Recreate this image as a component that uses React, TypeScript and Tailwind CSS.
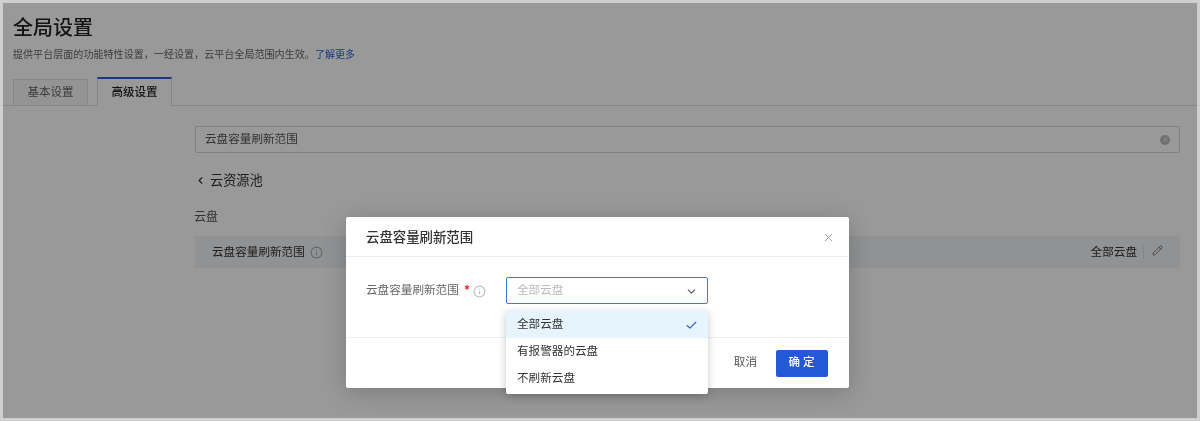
import { Check, ChevronDown, ChevronLeft, Info, Pencil, X } from "lucide-react";

const font = "font-['Inter','Noto_Sans_CJK_SC',sans-serif]";

export default function App() {
    return (
        <div className={`${font} relative w-[1200px] h-[421px] overflow-hidden border-[3px] border-[#cfcfcf] bg-white text-[#333] blur-[0.35px]`}>
            <div className="px-[10px] pt-[12px]">
                <h1 className="text-[20px] leading-[26px] font-medium text-[#222]">全局设置</h1>
                <p className="mt-[6px] text-[10.07px] leading-[14px] text-[#666]">
                    提供平台层面的功能特性设置，一经设置，云平台全局范围内生效。<span className="text-[#2a5fd6]">了解更多</span>
                </p>
            </div>
            <div className="mt-[16px] flex items-end gap-[9px] px-[10px] border-b border-[#e0e0e0] h-[29px]">
                <div className="w-[75px] h-[27px] -mb-px pt-[1px] border border-[#e0e0e0] bg-[#f7f7f7] text-[11.5px] text-[#666] flex items-center justify-center">基本设置</div>
                <div className="w-[75px] h-[29px] -mb-px pt-[1px] border border-[#e0e0e0] border-t-2 border-t-[#2a5fd6] border-b-white bg-white text-[11.5px] font-medium text-[#222] flex items-center justify-center">高级设置</div>
            </div>
            <div className="pl-[192px] pr-[17px] pt-[20px]">
                <div className="h-[27px] border border-[#d8d8d8] rounded-[2px] pl-[9px] pr-[9px] flex items-center justify-between text-[11.6px] text-[#555]">
                    <span>云盘容量刷新范围</span>
                    <span className="w-[10px] h-[10px] rounded-full bg-[#bbb] flex items-center justify-center">
                        <X size={7} strokeWidth={2.5} className="text-white" />
                    </span>
                </div>
                <div className="mt-[18px] flex items-center gap-[4px] text-[13.2px] leading-[18px] text-[#333]">
                    <ChevronLeft size={11} strokeWidth={2.5} />
                    <span>云资源池</span>
                </div>
                <div className="mt-[20px] text-[12px] leading-[16px] text-[#555] -ml-px">云盘</div>
                <div className="mt-[11px] h-[32px] bg-[#f2f3f5] pl-[17px] pr-[17px] pt-[1px] flex items-center justify-between text-[11.6px] text-[#333]">
                    <div className="flex items-center gap-[5px]">
                        <span>云盘容量刷新范围</span>
                        <Info size={13} className="text-[#aaa]" />
                    </div>
                    <div className="flex items-center">
                        <span>全部云盘</span>
                        <span className="mx-[6px] h-[12px] w-px bg-[#ddd]"></span>
                        <Pencil size={11} className="ml-[2px] -mt-[3px] text-[#777]" />
                    </div>
                </div>
            </div>

            <div className="absolute inset-0 bg-black/40"></div>

            <div className="absolute left-[343px] top-[214px] w-[503px] h-[171px] bg-white rounded-[2px] shadow-[0_4px_24px_rgba(0,0,0,0.2)] flex flex-col">
                <div className="h-[40px] shrink-0 border-b border-[#eee] pl-[20px] pr-[14px] pt-[1px] flex items-center justify-between">
                    <span className="text-[13.4px] font-medium text-[#333]">云盘容量刷新范围</span>
                    <X size={13} strokeWidth={1.5} className="text-[#888]" />
                </div>
                <div className="h-[81px] shrink-0 border-b border-[#f0f0f0] pl-[20px] pt-[20px] flex items-start">
                    <div className="w-[140px] h-[27px] pt-[1px] flex items-center text-[11.6px] text-[#666]">
                        <span>云盘容量刷新范围</span>
                        <span className="ml-[5px] text-[#f5222d] font-bold">*</span>
                        <Info size={13} className="ml-[3px] text-[#bbb]" />
                    </div>
                    <div className="relative w-[202px] h-[27px] border border-[#3f78e0] rounded-[2px] pl-[10px] pr-[9px] pt-[1px] flex items-center justify-between text-[11.6px] text-[#bbb]">
                        <span>全部云盘</span>
                        <ChevronDown size={13} className="text-[#555]" />
                        <div className="absolute -left-px top-[33px] w-[202px] h-[83px] pb-[3px] bg-white rounded-[2px] shadow-[0_2px_8px_rgba(0,0,0,0.22)] text-[11.6px] text-[#333]">
                            <div className="h-[27px] bg-[#e6f4fd] pl-[11px] pr-[10px] pt-[1px] flex items-center justify-between">
                                <span>全部云盘</span>
                                <Check size={13} className="text-[#2a5fd6]" />
                            </div>
                            <div className="h-[27px] pl-[11px] pt-[1px] flex items-center">有报警器的云盘</div>
                            <div className="h-[27px] pl-[11px] pt-[1px] flex items-center">不刷新云盘</div>
                        </div>
                    </div>
                </div>
                <div className="flex-1 pr-[21px] flex items-center justify-end gap-[19px]">
                    <span className="text-[11.6px] text-[#555]">取消</span>
                    <button className="w-[52px] h-[27px] pl-[2px] bg-[#2359d6] rounded-[2px] text-white text-[11.5px] font-medium tracking-[3px]">确定</button>
                </div>
            </div>
        </div>
    );
}
